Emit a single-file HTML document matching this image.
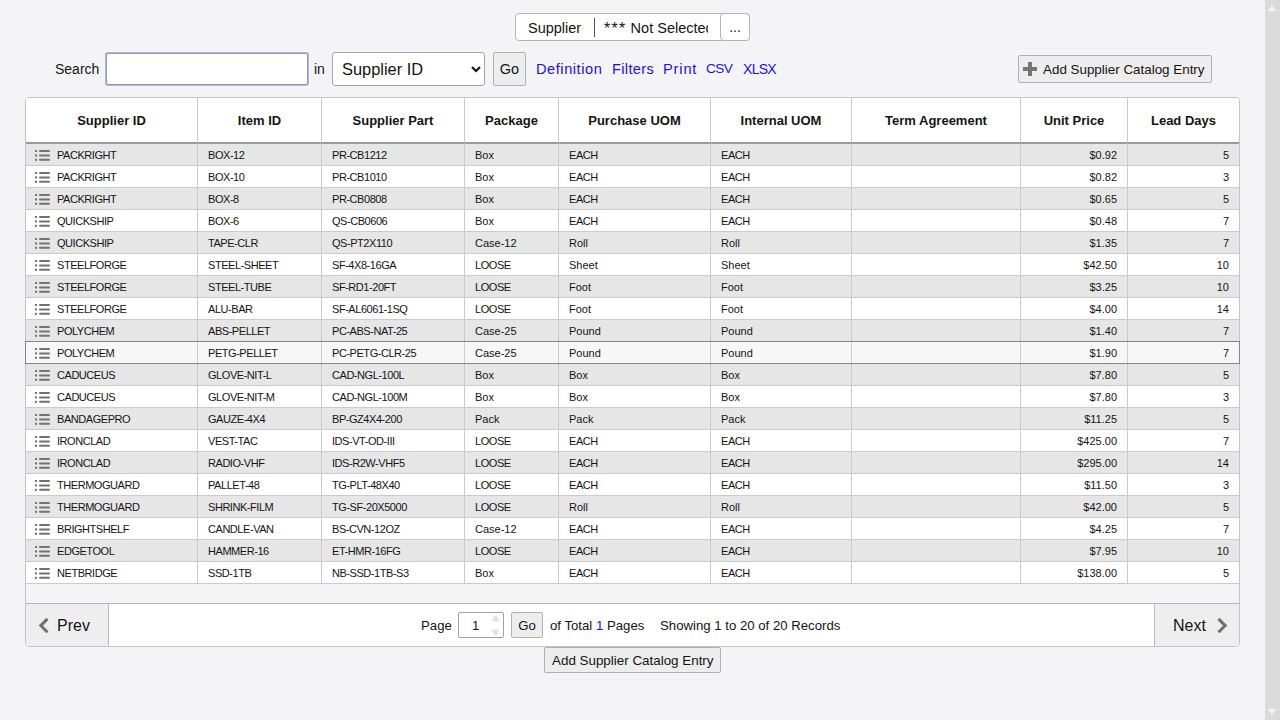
<!DOCTYPE html>
<html><head><meta charset="utf-8"><style>
*{box-sizing:border-box}
html,body{margin:0;padding:0;width:1280px;height:720px;overflow:hidden;background:#f4f4f6;font-family:"Liberation Sans",sans-serif;color:#141414}
.abs{position:absolute}
.sb{position:absolute;left:1265px;top:0;width:15px;height:720px;background:#dadad9}
.sb .up{position:absolute;left:3px;top:5px;width:0;height:0;border-left:4.5px solid transparent;border-right:4.5px solid transparent;border-bottom:6.5px solid #f4f4f4}
.sb .dn{position:absolute;left:3px;top:708.5px;width:0;height:0;border-left:4.5px solid transparent;border-right:4.5px solid transparent;border-top:6.5px solid #f4f4f4}
.sel{position:absolute;left:515px;top:13px;width:235px;height:28px;border:1px solid #b4b4b4;border-radius:4px;background:#fff}
.sel .t1{position:absolute;left:12px;top:5px;font-size:14.5px;line-height:18px}
.sel .dv{position:absolute;left:78px;top:4px;width:1px;height:19px;background:#555}
.sel .t2{display:block;position:absolute;left:88px;top:5px;width:104px;overflow:hidden;white-space:nowrap;font-size:14.5px;line-height:18px}
.sel .dots{position:absolute;left:204px;top:-1px;width:30px;height:28px;border:1px solid #b4b4b4;border-radius:4px;background:#fff;font-size:14px;text-align:center;line-height:26px}
.lbl{position:absolute;font-size:14px;line-height:18px}
.inp{position:absolute;left:106px;top:53px;width:202px;height:32px;border:1px solid #9a9a9a;border-radius:2px;background:#fff;box-shadow:0 0 0 1px #b0b0fb}
.select{position:absolute;left:332px;top:52px;width:153px;height:34px;border:1px solid #a6a6a6;border-radius:3px;background:#fff}
.select .t{position:absolute;left:9px;top:6px;font-size:16.4px;line-height:20px}
.select svg{position:absolute;left:138px;top:13px}
.btn{position:absolute;background:#ededed;border:1px solid #b0b0b0;border-radius:2px;text-align:center;white-space:nowrap}
.lnk{position:absolute;top:60px;font-size:14.6px;line-height:18px;color:#1a10f2;white-space:nowrap}
.tbl{position:absolute;left:25px;top:97px;width:1215px;height:550px;border:1px solid #c4c4c8;border-radius:4px;background:#f4f4f6;overflow:hidden}
table{border-collapse:separate;border-spacing:0;table-layout:fixed;width:1213px}
th{height:46px;background:#fff;font-size:13px;font-weight:700;text-align:center;border-right:1px solid #cbcbcf;border-bottom:2px solid #9a9a9a;padding:0;vertical-align:middle;color:#141414}
td{height:22px;font-size:11px;border-right:1px solid #cbcbcf;border-bottom:1px solid #cbcbcf;padding:0 10px;white-space:nowrap;overflow:hidden;vertical-align:middle;line-height:14px}
td svg{position:relative;top:1px}
th.last,td.last{border-right:none}
tr.odd td{background:#e6e6e6}
tr.even td{background:#fff}
tr.hov td{background:#f7f7f7}
.hovbox{position:absolute;left:25px;top:341px;width:1215px;height:23px;border:1px solid #858585;z-index:5}
tr.pre td{border-bottom-color:#7a7a7a}
td.r{text-align:right}
td.c0{padding-left:9px}
.ic{vertical-align:-1px;margin-right:6px}
.uc{letter-spacing:-0.45px}
.pg{position:absolute;left:0;top:505px;width:1213px;height:44px;border-top:1px solid #b4b4b4;background:#fff}
.pg .prev{position:absolute;left:0;top:0;width:83px;height:43px;background:#eeeeee;border-right:1px solid #bdbdbd}
.pg .next{position:absolute;left:1128px;top:0;width:85px;height:43px;background:#eeeeee;border-left:1px solid #bdbdbd}
.pg .big{position:absolute;top:12px;font-size:16px;line-height:20px}
.pg .sm{position:absolute;top:13px;font-size:13.2px;line-height:17px;white-space:nowrap}
</style></head><body>
<div class="sb"><div class="up"></div><div class="dn"></div></div>

<div class="sel"><span class="t1">Supplier</span><div class="dv"></div><span class="t2"><span style="font-size:16px;letter-spacing:1.3px;position:relative;top:1px">***</span> Not Selected</span><div class="dots">...</div></div>

<span class="lbl" style="left:55px;top:60px">Search</span>
<div class="inp"></div>
<span class="lbl" style="left:314px;top:60px">in</span>
<div class="select"><span class="t">Supplier ID</span><svg width="10" height="7" viewBox="0 0 10 7"><path d="M1 1 L5 5 L9 1" stroke="#111" stroke-width="2" fill="none"/></svg></div>
<div class="btn" style="left:493px;top:52px;width:33px;height:34px;font-size:14.5px;line-height:33px">Go</div>
<span class="lnk" style="left:536px;letter-spacing:0.55px">Definition</span>
<span class="lnk" style="left:612px;letter-spacing:0.35px">Filters</span>
<span class="lnk" style="left:663px;letter-spacing:0.85px">Print</span>
<span class="lnk" style="left:706px;font-size:13.6px;letter-spacing:-0.6px">CSV</span>
<span class="lnk" style="left:743px;font-size:14px;letter-spacing:-0.7px">XLSX</span>
<div class="btn" style="left:1018px;top:55px;width:194px;height:28px;text-align:left">
  <svg style="position:absolute;left:4px;top:6px" width="14" height="14" viewBox="0 0 14 14"><path d="M5 0h4v5h5v4h-5v5h-4v-5h-5v-4h5z" fill="#757575"/></svg>
  <span style="position:absolute;left:24px;top:5px;font-size:13.4px;line-height:17px">Add Supplier Catalog Entry</span>
</div>

<div class="tbl">
<table><colgroup><col style="width:172px"><col style="width:124px"><col style="width:143px"><col style="width:94px"><col style="width:152px"><col style="width:141px"><col style="width:169px"><col style="width:107px"><col style="width:111px"></colgroup>
<thead><tr><th>Supplier ID</th><th>Item ID</th><th>Supplier Part</th><th>Package</th><th>Purchase UOM</th><th>Internal UOM</th><th>Term Agreement</th><th>Unit Price</th><th class=last>Lead Days</th></tr></thead>
<tbody><tr class="odd"><td class="c0"><svg class="ic" width="16" height="12" viewBox="0 0 16 12"><g fill="#727272"><rect x="0" y="1" width="2" height="2"/><rect x="0" y="5.4" width="2" height="2"/><rect x="0" y="9.8" width="2" height="2"/><rect x="4" y="1" width="11" height="2" rx="1"/><rect x="4" y="5.4" width="11" height="2" rx="1"/><rect x="4" y="9.8" width="11" height="2" rx="1"/></g></svg><span class="uc">PACKRIGHT</span></td><td><span class="uc">BOX-12</span></td><td><span class="uc">PR-CB1212</span></td><td><span>Box</span></td><td><span class="uc">EACH</span></td><td><span class="uc">EACH</span></td><td></td><td class="r"><span>$0.92</span></td><td class="r last"><span>5</span></td></tr><tr class="even"><td class="c0"><svg class="ic" width="16" height="12" viewBox="0 0 16 12"><g fill="#727272"><rect x="0" y="1" width="2" height="2"/><rect x="0" y="5.4" width="2" height="2"/><rect x="0" y="9.8" width="2" height="2"/><rect x="4" y="1" width="11" height="2" rx="1"/><rect x="4" y="5.4" width="11" height="2" rx="1"/><rect x="4" y="9.8" width="11" height="2" rx="1"/></g></svg><span class="uc">PACKRIGHT</span></td><td><span class="uc">BOX-10</span></td><td><span class="uc">PR-CB1010</span></td><td><span>Box</span></td><td><span class="uc">EACH</span></td><td><span class="uc">EACH</span></td><td></td><td class="r"><span>$0.82</span></td><td class="r last"><span>3</span></td></tr><tr class="odd"><td class="c0"><svg class="ic" width="16" height="12" viewBox="0 0 16 12"><g fill="#727272"><rect x="0" y="1" width="2" height="2"/><rect x="0" y="5.4" width="2" height="2"/><rect x="0" y="9.8" width="2" height="2"/><rect x="4" y="1" width="11" height="2" rx="1"/><rect x="4" y="5.4" width="11" height="2" rx="1"/><rect x="4" y="9.8" width="11" height="2" rx="1"/></g></svg><span class="uc">PACKRIGHT</span></td><td><span class="uc">BOX-8</span></td><td><span class="uc">PR-CB0808</span></td><td><span>Box</span></td><td><span class="uc">EACH</span></td><td><span class="uc">EACH</span></td><td></td><td class="r"><span>$0.65</span></td><td class="r last"><span>5</span></td></tr><tr class="even"><td class="c0"><svg class="ic" width="16" height="12" viewBox="0 0 16 12"><g fill="#727272"><rect x="0" y="1" width="2" height="2"/><rect x="0" y="5.4" width="2" height="2"/><rect x="0" y="9.8" width="2" height="2"/><rect x="4" y="1" width="11" height="2" rx="1"/><rect x="4" y="5.4" width="11" height="2" rx="1"/><rect x="4" y="9.8" width="11" height="2" rx="1"/></g></svg><span class="uc">QUICKSHIP</span></td><td><span class="uc">BOX-6</span></td><td><span class="uc">QS-CB0606</span></td><td><span>Box</span></td><td><span class="uc">EACH</span></td><td><span class="uc">EACH</span></td><td></td><td class="r"><span>$0.48</span></td><td class="r last"><span>7</span></td></tr><tr class="odd"><td class="c0"><svg class="ic" width="16" height="12" viewBox="0 0 16 12"><g fill="#727272"><rect x="0" y="1" width="2" height="2"/><rect x="0" y="5.4" width="2" height="2"/><rect x="0" y="9.8" width="2" height="2"/><rect x="4" y="1" width="11" height="2" rx="1"/><rect x="4" y="5.4" width="11" height="2" rx="1"/><rect x="4" y="9.8" width="11" height="2" rx="1"/></g></svg><span class="uc">QUICKSHIP</span></td><td><span class="uc">TAPE-CLR</span></td><td><span class="uc">QS-PT2X110</span></td><td><span>Case-12</span></td><td><span>Roll</span></td><td><span>Roll</span></td><td></td><td class="r"><span>$1.35</span></td><td class="r last"><span>7</span></td></tr><tr class="even"><td class="c0"><svg class="ic" width="16" height="12" viewBox="0 0 16 12"><g fill="#727272"><rect x="0" y="1" width="2" height="2"/><rect x="0" y="5.4" width="2" height="2"/><rect x="0" y="9.8" width="2" height="2"/><rect x="4" y="1" width="11" height="2" rx="1"/><rect x="4" y="5.4" width="11" height="2" rx="1"/><rect x="4" y="9.8" width="11" height="2" rx="1"/></g></svg><span class="uc">STEELFORGE</span></td><td><span class="uc">STEEL-SHEET</span></td><td><span class="uc">SF-4X8-16GA</span></td><td><span class="uc">LOOSE</span></td><td><span>Sheet</span></td><td><span>Sheet</span></td><td></td><td class="r"><span>$42.50</span></td><td class="r last"><span>10</span></td></tr><tr class="odd"><td class="c0"><svg class="ic" width="16" height="12" viewBox="0 0 16 12"><g fill="#727272"><rect x="0" y="1" width="2" height="2"/><rect x="0" y="5.4" width="2" height="2"/><rect x="0" y="9.8" width="2" height="2"/><rect x="4" y="1" width="11" height="2" rx="1"/><rect x="4" y="5.4" width="11" height="2" rx="1"/><rect x="4" y="9.8" width="11" height="2" rx="1"/></g></svg><span class="uc">STEELFORGE</span></td><td><span class="uc">STEEL-TUBE</span></td><td><span class="uc">SF-RD1-20FT</span></td><td><span class="uc">LOOSE</span></td><td><span>Foot</span></td><td><span>Foot</span></td><td></td><td class="r"><span>$3.25</span></td><td class="r last"><span>10</span></td></tr><tr class="even"><td class="c0"><svg class="ic" width="16" height="12" viewBox="0 0 16 12"><g fill="#727272"><rect x="0" y="1" width="2" height="2"/><rect x="0" y="5.4" width="2" height="2"/><rect x="0" y="9.8" width="2" height="2"/><rect x="4" y="1" width="11" height="2" rx="1"/><rect x="4" y="5.4" width="11" height="2" rx="1"/><rect x="4" y="9.8" width="11" height="2" rx="1"/></g></svg><span class="uc">STEELFORGE</span></td><td><span class="uc">ALU-BAR</span></td><td><span class="uc">SF-AL6061-1SQ</span></td><td><span class="uc">LOOSE</span></td><td><span>Foot</span></td><td><span>Foot</span></td><td></td><td class="r"><span>$4.00</span></td><td class="r last"><span>14</span></td></tr><tr class="odd"><td class="c0"><svg class="ic" width="16" height="12" viewBox="0 0 16 12"><g fill="#727272"><rect x="0" y="1" width="2" height="2"/><rect x="0" y="5.4" width="2" height="2"/><rect x="0" y="9.8" width="2" height="2"/><rect x="4" y="1" width="11" height="2" rx="1"/><rect x="4" y="5.4" width="11" height="2" rx="1"/><rect x="4" y="9.8" width="11" height="2" rx="1"/></g></svg><span class="uc">POLYCHEM</span></td><td><span class="uc">ABS-PELLET</span></td><td><span class="uc">PC-ABS-NAT-25</span></td><td><span>Case-25</span></td><td><span>Pound</span></td><td><span>Pound</span></td><td></td><td class="r"><span>$1.40</span></td><td class="r last"><span>7</span></td></tr><tr class="hov"><td class="c0"><svg class="ic" width="16" height="12" viewBox="0 0 16 12"><g fill="#727272"><rect x="0" y="1" width="2" height="2"/><rect x="0" y="5.4" width="2" height="2"/><rect x="0" y="9.8" width="2" height="2"/><rect x="4" y="1" width="11" height="2" rx="1"/><rect x="4" y="5.4" width="11" height="2" rx="1"/><rect x="4" y="9.8" width="11" height="2" rx="1"/></g></svg><span class="uc">POLYCHEM</span></td><td><span class="uc">PETG-PELLET</span></td><td><span class="uc">PC-PETG-CLR-25</span></td><td><span>Case-25</span></td><td><span>Pound</span></td><td><span>Pound</span></td><td></td><td class="r"><span>$1.90</span></td><td class="r last"><span>7</span></td></tr><tr class="odd"><td class="c0"><svg class="ic" width="16" height="12" viewBox="0 0 16 12"><g fill="#727272"><rect x="0" y="1" width="2" height="2"/><rect x="0" y="5.4" width="2" height="2"/><rect x="0" y="9.8" width="2" height="2"/><rect x="4" y="1" width="11" height="2" rx="1"/><rect x="4" y="5.4" width="11" height="2" rx="1"/><rect x="4" y="9.8" width="11" height="2" rx="1"/></g></svg><span class="uc">CADUCEUS</span></td><td><span class="uc">GLOVE-NIT-L</span></td><td><span class="uc">CAD-NGL-100L</span></td><td><span>Box</span></td><td><span>Box</span></td><td><span>Box</span></td><td></td><td class="r"><span>$7.80</span></td><td class="r last"><span>5</span></td></tr><tr class="even"><td class="c0"><svg class="ic" width="16" height="12" viewBox="0 0 16 12"><g fill="#727272"><rect x="0" y="1" width="2" height="2"/><rect x="0" y="5.4" width="2" height="2"/><rect x="0" y="9.8" width="2" height="2"/><rect x="4" y="1" width="11" height="2" rx="1"/><rect x="4" y="5.4" width="11" height="2" rx="1"/><rect x="4" y="9.8" width="11" height="2" rx="1"/></g></svg><span class="uc">CADUCEUS</span></td><td><span class="uc">GLOVE-NIT-M</span></td><td><span class="uc">CAD-NGL-100M</span></td><td><span>Box</span></td><td><span>Box</span></td><td><span>Box</span></td><td></td><td class="r"><span>$7.80</span></td><td class="r last"><span>3</span></td></tr><tr class="odd"><td class="c0"><svg class="ic" width="16" height="12" viewBox="0 0 16 12"><g fill="#727272"><rect x="0" y="1" width="2" height="2"/><rect x="0" y="5.4" width="2" height="2"/><rect x="0" y="9.8" width="2" height="2"/><rect x="4" y="1" width="11" height="2" rx="1"/><rect x="4" y="5.4" width="11" height="2" rx="1"/><rect x="4" y="9.8" width="11" height="2" rx="1"/></g></svg><span class="uc">BANDAGEPRO</span></td><td><span class="uc">GAUZE-4X4</span></td><td><span class="uc">BP-GZ4X4-200</span></td><td><span>Pack</span></td><td><span>Pack</span></td><td><span>Pack</span></td><td></td><td class="r"><span>$11.25</span></td><td class="r last"><span>5</span></td></tr><tr class="even"><td class="c0"><svg class="ic" width="16" height="12" viewBox="0 0 16 12"><g fill="#727272"><rect x="0" y="1" width="2" height="2"/><rect x="0" y="5.4" width="2" height="2"/><rect x="0" y="9.8" width="2" height="2"/><rect x="4" y="1" width="11" height="2" rx="1"/><rect x="4" y="5.4" width="11" height="2" rx="1"/><rect x="4" y="9.8" width="11" height="2" rx="1"/></g></svg><span class="uc">IRONCLAD</span></td><td><span class="uc">VEST-TAC</span></td><td><span class="uc">IDS-VT-OD-III</span></td><td><span class="uc">LOOSE</span></td><td><span class="uc">EACH</span></td><td><span class="uc">EACH</span></td><td></td><td class="r"><span>$425.00</span></td><td class="r last"><span>7</span></td></tr><tr class="odd"><td class="c0"><svg class="ic" width="16" height="12" viewBox="0 0 16 12"><g fill="#727272"><rect x="0" y="1" width="2" height="2"/><rect x="0" y="5.4" width="2" height="2"/><rect x="0" y="9.8" width="2" height="2"/><rect x="4" y="1" width="11" height="2" rx="1"/><rect x="4" y="5.4" width="11" height="2" rx="1"/><rect x="4" y="9.8" width="11" height="2" rx="1"/></g></svg><span class="uc">IRONCLAD</span></td><td><span class="uc">RADIO-VHF</span></td><td><span class="uc">IDS-R2W-VHF5</span></td><td><span class="uc">LOOSE</span></td><td><span class="uc">EACH</span></td><td><span class="uc">EACH</span></td><td></td><td class="r"><span>$295.00</span></td><td class="r last"><span>14</span></td></tr><tr class="even"><td class="c0"><svg class="ic" width="16" height="12" viewBox="0 0 16 12"><g fill="#727272"><rect x="0" y="1" width="2" height="2"/><rect x="0" y="5.4" width="2" height="2"/><rect x="0" y="9.8" width="2" height="2"/><rect x="4" y="1" width="11" height="2" rx="1"/><rect x="4" y="5.4" width="11" height="2" rx="1"/><rect x="4" y="9.8" width="11" height="2" rx="1"/></g></svg><span class="uc">THERMOGUARD</span></td><td><span class="uc">PALLET-48</span></td><td><span class="uc">TG-PLT-48X40</span></td><td><span class="uc">LOOSE</span></td><td><span class="uc">EACH</span></td><td><span class="uc">EACH</span></td><td></td><td class="r"><span>$11.50</span></td><td class="r last"><span>3</span></td></tr><tr class="odd"><td class="c0"><svg class="ic" width="16" height="12" viewBox="0 0 16 12"><g fill="#727272"><rect x="0" y="1" width="2" height="2"/><rect x="0" y="5.4" width="2" height="2"/><rect x="0" y="9.8" width="2" height="2"/><rect x="4" y="1" width="11" height="2" rx="1"/><rect x="4" y="5.4" width="11" height="2" rx="1"/><rect x="4" y="9.8" width="11" height="2" rx="1"/></g></svg><span class="uc">THERMOGUARD</span></td><td><span class="uc">SHRINK-FILM</span></td><td><span class="uc">TG-SF-20X5000</span></td><td><span class="uc">LOOSE</span></td><td><span>Roll</span></td><td><span>Roll</span></td><td></td><td class="r"><span>$42.00</span></td><td class="r last"><span>5</span></td></tr><tr class="even"><td class="c0"><svg class="ic" width="16" height="12" viewBox="0 0 16 12"><g fill="#727272"><rect x="0" y="1" width="2" height="2"/><rect x="0" y="5.4" width="2" height="2"/><rect x="0" y="9.8" width="2" height="2"/><rect x="4" y="1" width="11" height="2" rx="1"/><rect x="4" y="5.4" width="11" height="2" rx="1"/><rect x="4" y="9.8" width="11" height="2" rx="1"/></g></svg><span class="uc">BRIGHTSHELF</span></td><td><span class="uc">CANDLE-VAN</span></td><td><span class="uc">BS-CVN-12OZ</span></td><td><span>Case-12</span></td><td><span class="uc">EACH</span></td><td><span class="uc">EACH</span></td><td></td><td class="r"><span>$4.25</span></td><td class="r last"><span>7</span></td></tr><tr class="odd"><td class="c0"><svg class="ic" width="16" height="12" viewBox="0 0 16 12"><g fill="#727272"><rect x="0" y="1" width="2" height="2"/><rect x="0" y="5.4" width="2" height="2"/><rect x="0" y="9.8" width="2" height="2"/><rect x="4" y="1" width="11" height="2" rx="1"/><rect x="4" y="5.4" width="11" height="2" rx="1"/><rect x="4" y="9.8" width="11" height="2" rx="1"/></g></svg><span class="uc">EDGETOOL</span></td><td><span class="uc">HAMMER-16</span></td><td><span class="uc">ET-HMR-16FG</span></td><td><span class="uc">LOOSE</span></td><td><span class="uc">EACH</span></td><td><span class="uc">EACH</span></td><td></td><td class="r"><span>$7.95</span></td><td class="r last"><span>10</span></td></tr><tr class="even"><td class="c0"><svg class="ic" width="16" height="12" viewBox="0 0 16 12"><g fill="#727272"><rect x="0" y="1" width="2" height="2"/><rect x="0" y="5.4" width="2" height="2"/><rect x="0" y="9.8" width="2" height="2"/><rect x="4" y="1" width="11" height="2" rx="1"/><rect x="4" y="5.4" width="11" height="2" rx="1"/><rect x="4" y="9.8" width="11" height="2" rx="1"/></g></svg><span class="uc">NETBRIDGE</span></td><td><span class="uc">SSD-1TB</span></td><td><span class="uc">NB-SSD-1TB-S3</span></td><td><span>Box</span></td><td><span class="uc">EACH</span></td><td><span class="uc">EACH</span></td><td></td><td class="r"><span>$138.00</span></td><td class="r last"><span>5</span></td></tr></tbody></table>
<div class="pg">
  <div class="prev"><svg style="position:absolute;left:0;top:0" width="83" height="43"><path d="M21.5 14.9 L14.8 21.6 L21.5 28.3" stroke="#707070" stroke-width="3" fill="none"/></svg><span class="big" style="left:31px">Prev</span></div>
  <span class="sm" style="left:395px">Page</span>
  <div style="position:absolute;left:432px;top:8px;width:46px;height:26px;border:1px solid #a0a0a0;border-radius:2px;background:#fff">
     <span style="position:absolute;left:13px;top:4px;font-size:13px;line-height:17px">1</span>
     <svg style="position:absolute;left:32px;top:1px" width="9" height="23" viewBox="0 0 9 23"><path d="M0.5 7.5 L3.5 1.5 L5.5 1.5 L8.5 7.5z M0.5 15.5 L8.5 15.5 L5.5 21.5 L3.5 21.5z" fill="#e2e2e2"/></svg>
  </div>
  <div class="btn" style="left:485px;top:8px;width:32px;height:26px;font-size:13.2px;line-height:25px">Go</div>
  <span class="sm" style="left:524px">of Total <span style="color:#1a10f2">1</span> Pages</span>
  <span class="sm" style="left:634px">Showing 1 to 20 of 20 Records</span>
  <div class="next"><span class="big" style="left:18px">Next</span><svg style="position:absolute;left:0;top:0" width="85" height="43"><path d="M63.5 14.9 L70.2 21.6 L63.5 28.3" stroke="#707070" stroke-width="3" fill="none"/></svg></div>
</div>
</div>

<div class="hovbox"></div>
<div class="btn" style="left:544px;top:647px;width:177px;height:26px;">
  <span style="position:absolute;left:7px;top:4px;font-size:13.4px;line-height:17px">Add Supplier Catalog Entry</span>
</div>
</body></html>
